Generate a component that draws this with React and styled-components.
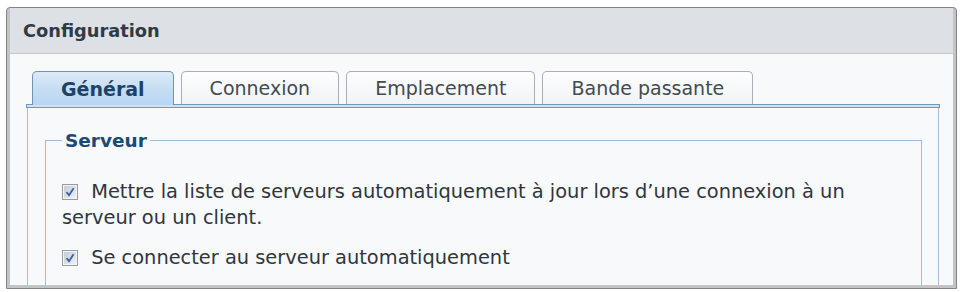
import React from "react";
import styled, { createGlobalStyle } from "styled-components";

const GlobalStyle = createGlobalStyle`
	body {
		margin: 0;
		background: #ffffff;
		font-family: "DejaVu Sans", Verdana, sans-serif;
	}
`;

const Window = styled.div`
	box-sizing: border-box;
	margin: 7px 0 0 6px;
	width: 951px;
	height: 282px;
	border: 1px solid #838383;
	border-radius: 4px 4px 0 0;
	background: #c4c4c4;
	padding: 0 3px 3px;
	display: flex;
	flex-direction: column;
	overflow: hidden;
`;

const Header = styled.div`
	height: 45px;
	flex: none;
	display: flex;
	align-items: center;
	padding-left: 13px;
	background: #dde1e5;
	border-bottom: 1px solid #c3c8cd;
	font-size: 17.8px;
	font-weight: bold;
	color: #2f3a45;
`;

const Body = styled.div`
	flex: 1;
	overflow: hidden;
	background: #f7f9fb;
	padding: 17px 13px 0 16px;
`;

const TabBar = styled.div`
	display: flex;
	align-items: flex-end;
	gap: 7px;
	padding-left: 6px;
	position: relative;
	z-index: 1;
`;

const Tab = styled.div`
	box-sizing: border-box;
	height: ${(p) => (p.$active ? "34px" : "33px")};
	margin-bottom: ${(p) => (p.$active ? "-1px" : "0")};
	padding: 0 28px;
	display: flex;
	align-items: center;
	border: 1px solid ${(p) => (p.$active ? "#6d93b8" : "#a9aeb4")};
	border-bottom: none;
	border-radius: 5px 5px 0 0;
	background: ${(p) =>
		p.$active
			? "linear-gradient(#dceaf7, #c4ddf3 55%, #b9d6f1)"
			: "linear-gradient(#fdfdfd, #f1f3f5)"};
	font-size: 19px;
	font-weight: ${(p) => (p.$active ? "bold" : "normal")};
	color: ${(p) => (p.$active ? "#1e4266" : "#434a52")};
	white-space: nowrap;
`;

const Strip = styled.div`
	height: 2px;
	border: 1px solid #7197ba;
	background: #cfe2f3;
`;

const Panel = styled.div`
	margin: 0 1px;
	border-left: 1px solid #a3bed6;
	border-right: 1px solid #a3bed6;
	padding: 22px 16px 40px 17px;
`;

const Fieldset = styled.fieldset`
	margin: 0;
	border: 1px solid #a0bdd6;
	padding: 28px 16px 30px 16px;
`;

const Legend = styled.legend`
	margin-left: 0;
	padding: 0 3px;
	font-size: 18.5px;
	font-weight: bold;
	color: #1c4a76;
`;

const Option = styled.label`
	display: block;
	font-size: 19.4px;
	line-height: 26px;
	color: #30363c;
	margin-bottom: 14px;
`;

const Box = styled.svg`
	width: 16px;
	height: 16px;
	vertical-align: -2px;
	margin-right: 7px;
`;

const Check = () => (
	<Box viewBox="0 0 16 16">
		<defs>
			<linearGradient id="cb" x1="0" y1="0" x2="1" y2="1">
				<stop offset="0" stopColor="#c6ccd3" />
				<stop offset="1" stopColor="#eef1f4" />
			</linearGradient>
		</defs>
		<rect x="0.5" y="0.5" width="15" height="15" fill="#f3f4f6" stroke="#979ca3" />
		<rect x="2" y="2" width="12" height="12" fill="url(#cb)" />
		<path d="M4.5 8.2 L7 11.2 L11.6 4.2" fill="none" stroke="#3d5fa6" strokeWidth="1.8" />
	</Box>
);

const tabs = ["Général", "Connexion", "Emplacement", "Bande passante"];

export default function App() {
	return (
		<>
			<GlobalStyle />
			<Window>
				<Header>Configuration</Header>
				<Body>
					<TabBar>
						{tabs.map((t, i) => (
							<Tab key={t} $active={i === 0}>
								{t}
							</Tab>
						))}
					</TabBar>
					<Strip />
					<Panel>
						<Fieldset>
							<Legend>Serveur</Legend>
							<Option>
								<Check /> Mettre la liste de serveurs automatiquement à jour lors d’une connexion à un serveur ou un client.
							</Option>
							<Option>
								<Check /> Se connecter au serveur automatiquement
							</Option>
						</Fieldset>
					</Panel>
				</Body>
			</Window>
		</>
	);
}
